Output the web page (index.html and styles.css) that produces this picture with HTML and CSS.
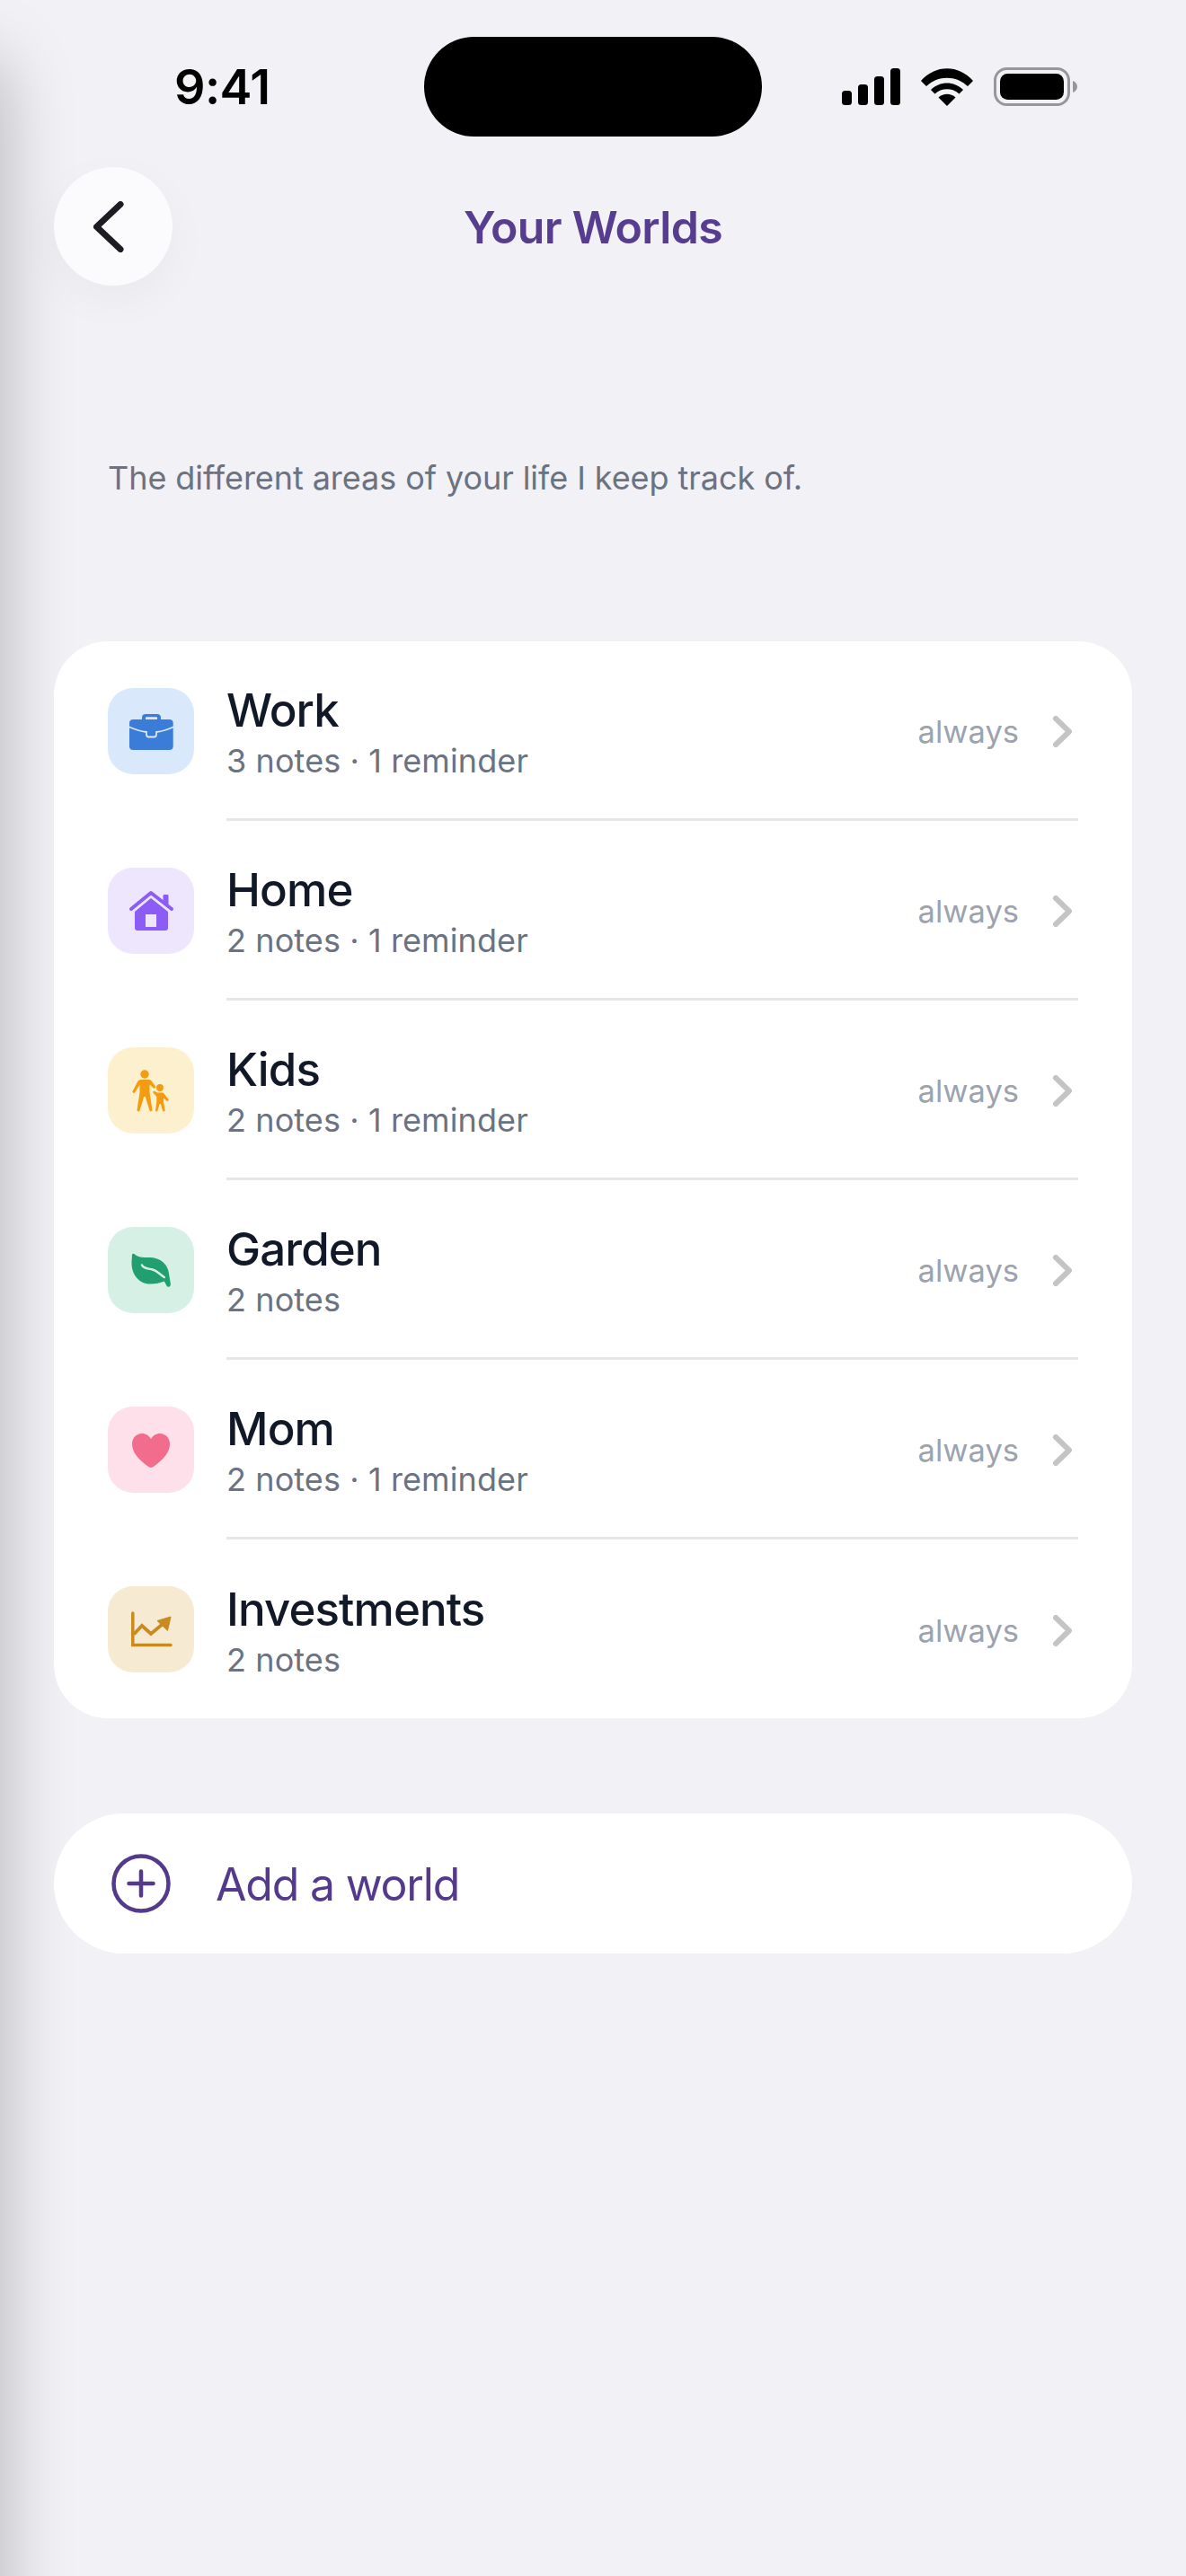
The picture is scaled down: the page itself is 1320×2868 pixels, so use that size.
FILE: index.html
```html
<!DOCTYPE html>
<html lang="en">

<head>
	<meta charset="utf-8" />
	<title>Your Worlds</title>
	<meta name="viewport" content="width=device-width, initial-scale=1.0">
	<link rel="stylesheet" href="styles.css">
</head>

<body>
	<div class="screen">
		<!-- shadow of the sheet underneath, off the left edge -->
		<div class="edge-shade"></div>

		<div class="status-bar">
			<div class="time">9:41</div>
			<div class="island"></div>
			<div class="status-icons">
				<svg class="signal" width="65" height="41" viewBox="0 0 65 41">
					<rect x="0" y="25" width="11" height="16" rx="3.5" />
					<rect x="18" y="18" width="11" height="23" rx="3.5" />
					<rect x="36" y="9" width="11" height="32" rx="3.5" />
					<rect x="54" y="0" width="11" height="41" rx="3.5" />
				</svg>
				<svg class="wifi" width="58" height="42" viewBox="0 0 58 42">
					<path d="M29 42 L19.5 32.5 C25 27.5 33 27.5 38.500 32.500 Z" />
					<path d="M11 24 L15.500 28.500 C22.500 21.500 35.500 21.500 42.500 28.500 L47 24 C37 14 21 14 11 24 Z" />
					<path d="M0 14 L6 20 C18.500 7.500 39.500 7.500 52 20 L58 14 C42 -4.500 16 -4.500 0 14 Z" />
				</svg>
				<svg class="battery" width="93" height="43" viewBox="0 0 93 43">
					<rect x="1.500" y="1.500" width="82" height="40" rx="13" fill="none" stroke="#97979b" stroke-width="3" />
					<rect x="7" y="7" width="71" height="29" rx="8.500" />
					<path d="M88 15 C91 16 93 18.500 93 21.500 C93 24.500 91 27 88 28 Z" fill="#97979b" />
				</svg>
			</div>
		</div>

		<div class="page">
			<header class="top-bar">
				<button class="back-btn">
					<svg width="34" height="57" viewBox="0 0 34 57">
						<path d="M30 3.500 L3.500 28.500 L30 53.500" fill="none" stroke="#1c1c22" stroke-width="7" stroke-linecap="round" stroke-linejoin="round" />
					</svg>
				</button>
				<h1 class="page-title">Your Worlds</h1>
			</header>

			<p class="intro">The different areas of your life I keep track of.</p>

			<div class="worlds">
				<div class="world">
					<div class="tile tile-work">
						<svg width="96" height="96" viewBox="0 0 96 96">
							<path d="M38 35 V33 C38 30.500 39.500 29 42 29 H55 C57.500 29 59 30.500 59 33 V35 H68.700 C71 35 72.700 36.500 72.700 39 V65 C72.700 67.500 71 69 68.700 69 H28 C25.700 69 24 67.500 24 65 V39 C24 36.500 25.700 35 28 35 Z M42 35 H55 V33 C55 32.500 54.700 32.300 54 32.300 H43 C42.300 32.300 42 32.500 42 33 Z" fill="#3c7cd9" fill-rule="evenodd" />
							<path d="M23 43 C32 47 39 48.500 43 49 V51.500 C43 53.500 44 54.500 45.500 54.500 H51.500 C53 54.500 54 53.500 54 51.500 V49 C58 48.500 65 47 74 43" fill="none" stroke="#dae8fb" stroke-width="1.800" />
						</svg>
					</div>
					<div class="world-body">
						<div class="world-text">
							<div class="world-name">Work</div>
							<div class="world-count">3 notes · 1 reminder</div>
						</div>
						<span class="world-scope">always</span>
						<svg class="chevron" width="21" height="35" viewBox="0 0 21 35">
							<path d="M3 3 L18 17.500 L3 32" />
						</svg>
					</div>
				</div>

				<div class="world">
					<div class="tile tile-home">
						<svg width="96" height="96" viewBox="0 0 96 96">
							<path d="M26 46 L48 28 L71 46" fill="none" stroke="#8b5cf6" stroke-width="4" stroke-linecap="round" stroke-linejoin="round" />
							<path d="M61.500 31.500 C61.500 30.500 62 30 63 30 H66 C67 30 67.500 30.500 67.500 31.500 V42 L61.500 37 Z" fill="#8b5cf6" />
							<path d="M48 34 L67 49 V67 C67 69 66 70 64 70 H33 C31 70 30 69 30 67 V49 Z M42 52 V66 H54 V52 Z" fill="#8b5cf6" fill-rule="evenodd" />
						</svg>
					</div>
					<div class="world-body">
						<div class="world-text">
							<div class="world-name">Home</div>
							<div class="world-count">2 notes · 1 reminder</div>
						</div>
						<span class="world-scope">always</span>
						<svg class="chevron" width="21" height="35" viewBox="0 0 21 35">
							<path d="M3 3 L18 17.500 L3 32" />
						</svg>
					</div>
				</div>

				<div class="world">
					<div class="tile tile-kids">
						<svg width="96" height="96" viewBox="0 0 96 96">
							<g fill="#f39c12">
								<circle cx="41" cy="30" r="4.700" />
								<path d="M36.500 36 H45.500 C47.500 36 48.500 37 49.500 38.500 L53.500 44.500 L51.500 46 L46.500 41.500 V50 L49.500 70 C49.500 71.500 47 72 46.500 70.500 L41.800 55 H40.200 L35.500 70.500 C35 72 32.500 71.500 32.500 70 L35.500 50 V42 L30 50.500 C29 51.500 27 50.500 27.500 49 L33 38.500 C34 37 35 36 36.500 36 Z" />
								<circle cx="58" cy="45" r="3.900" />
								<path d="M55 50.500 H60.500 C61.500 50.500 62 51 62.500 51.500 L67.500 58 C68.300 59.500 66.500 60.800 65.300 59.500 L62 56.500 V61 L63.700 70 C63.700 71.800 61.400 72 61 70.500 L58.800 63 H57.600 L55.500 70.500 C55 72 53 71.800 53 70 L54.300 61 V55 L50 50 L51.500 48.500 Z" />
							</g>
						</svg>
					</div>
					<div class="world-body">
						<div class="world-text">
							<div class="world-name">Kids</div>
							<div class="world-count">2 notes · 1 reminder</div>
						</div>
						<span class="world-scope">always</span>
						<svg class="chevron" width="21" height="35" viewBox="0 0 21 35">
							<path d="M3 3 L18 17.500 L3 32" />
						</svg>
					</div>
				</div>

				<div class="world">
					<div class="tile tile-garden">
						<svg width="96" height="96" viewBox="0 0 96 96">
							<path d="M27 31 C27.500 29.500 29 29.500 30 30.500 C33 33.500 38 34 46 34 C59 34 67 42 68 52 L69.800 63 C70.500 66.500 67 68 65.500 65.500 L62.800 60.500 C58 62.500 53 63.500 47 63.500 C35 63.500 26 53 26.500 39 Z" fill="#219f70" />
							<path d="M38 42.500 C40 47 45 46 50 47.500 C55 49 57 52 62.800 56" fill="none" stroke="#d6f0e5" stroke-width="2.500" stroke-linecap="round" />
						</svg>
					</div>
					<div class="world-body">
						<div class="world-text">
							<div class="world-name">Garden</div>
							<div class="world-count">2 notes</div>
						</div>
						<span class="world-scope">always</span>
						<svg class="chevron" width="21" height="35" viewBox="0 0 21 35">
							<path d="M3 3 L18 17.500 L3 32" />
						</svg>
					</div>
				</div>

				<div class="world">
					<div class="tile tile-mom">
						<svg width="96" height="96" viewBox="0 0 96 96">
							<path d="M48 68 C46.800 68 45.500 67.200 44 66 C35 59.500 27 51.500 27 41.500 C27 35 31.800 30 38 30 C42.300 30 45.800 32.300 48 36 C50.200 32.300 53.700 30 58 30 C64.200 30 69 35 69 41.500 C69 51.500 61 59.500 52 66 C50.500 67.200 49.200 68 48 68 Z" fill="#f26d8d" />
						</svg>
					</div>
					<div class="world-body">
						<div class="world-text">
							<div class="world-name">Mom</div>
							<div class="world-count">2 notes · 1 reminder</div>
						</div>
						<span class="world-scope">always</span>
						<svg class="chevron" width="21" height="35" viewBox="0 0 21 35">
							<path d="M3 3 L18 17.500 L3 32" />
						</svg>
					</div>
				</div>

				<div class="world">
					<div class="tile tile-money">
						<svg width="96" height="96" viewBox="0 0 96 96">
							<path d="M27.800 30 V65.500 H70" fill="none" stroke="#c98a1e" stroke-width="3.500" stroke-linecap="round" />
							<path d="M29 53.500 L38 44 L48 53 L60 43" fill="none" stroke="#c98a1e" stroke-width="3.800" />
							<path d="M70 34 L55 38.500 L66.500 49.500 Z" fill="#c98a1e" stroke="#c98a1e" stroke-width="1" stroke-linejoin="round" />
						</svg>
					</div>
					<div class="world-body">
						<div class="world-text">
							<div class="world-name">Investments</div>
							<div class="world-count">2 notes</div>
						</div>
						<span class="world-scope">always</span>
						<svg class="chevron" width="21" height="35" viewBox="0 0 21 35">
							<path d="M3 3 L18 17.500 L3 32" />
						</svg>
					</div>
				</div>
			</div>

			<button class="add-world">
				<svg width="66" height="66" viewBox="0 0 66 66">
					<circle cx="33" cy="33" r="30.500" fill="none" stroke="#533a8b" stroke-width="4.500" />
					<path d="M33 19.500 V46.500 M19.500 33 H46.500" fill="none" stroke="#533a8b" stroke-width="4.500" stroke-linecap="round" />
				</svg>
				<span class="add-label">Add a world</span>
			</button>
		</div>
	</div>
</body>

</html>
```

FILE: styles.css
```css
* {
	box-sizing: border-box;
}

body {
	margin: 0;
	background-color: #f1f1f6;
	font-family: Inter, "Noto Sans", sans-serif;
}

.screen {
	position: relative;
	width: 1320px;
	height: 2868px;
	padding-top: 41px;
	overflow: hidden;
}

.edge-shade {
	position: absolute;
	left: -70px;
	top: 70px;
	width: 70px;
	height: 2900px;
	box-shadow: 0 0 80px rgba(0, 0, 0, 0.28);
}

.status-bar {
	position: relative;
	display: grid;
	grid-template-columns: 472px 376px 1fr;
	align-items: center;
	height: 111px;
}

.time {
	padding-left: 194px;
	font-size: 54px;
	font-weight: 600;
	color: #000;
	letter-spacing: -0.6px;
}

.island {
	height: 111px;
	border-radius: 56px;
	background-color: #000;
}

.status-icons {
	display: flex;
	align-items: center;
	gap: 23px;
	padding-left: 89px;
}

.page {
	position: relative;
	padding: 34px 60px 0;
}

.top-bar {
	display: grid;
	grid-template-columns: 132px 1fr 132px;
	align-items: center;
}

.back-btn {
	display: flex;
	justify-content: center;
	align-items: center;
	width: 132px;
	height: 132px;
	padding: 0 10px 0 0;
	border: none;
	border-radius: 50%;
	background-color: #fbfafd;
	box-shadow: 0 16px 50px rgba(0, 0, 0, 0.04);
}

.page-title {
	margin: 0;
	padding-top: 2px;
	text-align: center;
	font-size: 50px;
	font-weight: 600;
	letter-spacing: -0.7px;
	color: #563d8f;
}

.intro {
	margin: 189px 0 0 60px;
	font-size: 36px;
	line-height: 50px;
	letter-spacing: -0.07px;
	color: #6b7280;
}

.worlds {
	margin-top: 157px;
	border-radius: 60px;
	background-color: #fff;
}

.world {
	display: flex;
	align-items: center;
	gap: 36px;
	padding: 0 60px;
}

.tile {
	flex: none;
	width: 96px;
	height: 96px;
	border-radius: 28px;
}

.tile svg {
	display: block;
}

.tile-work { background-color: #dae8fb; }
.tile-home { background-color: #ede6fd; }
.tile-kids { background-color: #fdf0cf; }
.tile-garden { background-color: #d6f0e5; }
.tile-mom { background-color: #fde0e9; }
.tile-money { background-color: #f6ead3; }

.world-body {
	flex: 1;
	display: flex;
	align-items: center;
	height: 200px;
	border-bottom: 3px solid #e7e7ea;
}

.world:last-child .world-body {
	height: 199px;
	border-bottom: none;
}

.world-text {
	flex: 1;
	padding-top: 4px;
}

.world-name {
	font-size: 51px;
	font-weight: 500;
	line-height: 62px;
	letter-spacing: -0.9px;
	color: #111827;
}

.world-count {
	margin-top: 2px;
	font-size: 36px;
	line-height: 46px;
	letter-spacing: 0.1px;
	color: #6b7280;
}

.world-scope {
	margin-top: 4px;
	margin-right: 38px;
	font-size: 34.5px;
	color: #9ca3af;
}

.chevron {
	margin-top: 3px;
	margin-right: 7px;
	fill: none;
	stroke: #c4c4c6;
	stroke-width: 6;
	stroke-linecap: round;
	stroke-linejoin: round;
}

.add-world {
	display: flex;
	align-items: center;
	gap: 50px;
	width: 100%;
	height: 156px;
	margin-top: 106px;
	padding: 0 0 0 64px;
	border: none;
	border-radius: 78px;
	background-color: #fff;
	font-family: inherit;
	font-size: 50px;
	letter-spacing: -1.2px;
	color: #533a8b;
}

.add-label {
	padding-top: 2px;
}
```
